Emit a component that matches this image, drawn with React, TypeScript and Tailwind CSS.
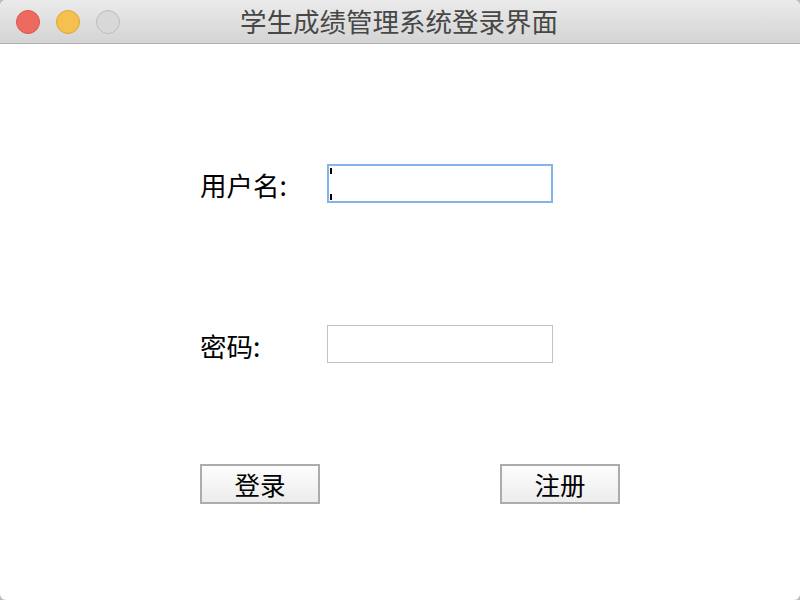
import React from "react";

const cjk = { fontFamily: '"Noto Sans CJK SC", "Noto Sans", sans-serif' };

export default function App() {
  return (
    <div className="w-[800px] h-[600px] bg-[#b8bcc0]" style={cjk}>
      <div className="w-[800px] h-[600px] rounded-[6px] overflow-hidden bg-white flex flex-col">
        <div className="relative h-[44px] shrink-0 bg-gradient-to-b from-[#ebebeb] to-[#d4d4d4] border-b border-[#b0b0b0] flex items-center justify-center">
          <div className="absolute left-[16px] top-[10px] flex gap-[16px]">
            <div className="w-[24px] h-[24px] rounded-full bg-[#ee6a5f] border border-[#d9574d]" />
            <div className="w-[24px] h-[24px] rounded-full bg-[#f6c04f] border border-[#dca53c]" />
            <div className="w-[24px] h-[24px] rounded-full bg-[#d8d8d8] border border-[#bdbdbd]" />
          </div>
          <span className="text-[26.5px] leading-none text-[#474747] ml-[-2px]">学生成绩管理系统登录界面</span>
        </div>
        <div className="flex flex-col pl-[200px] pt-[120px]">
          <div className="flex items-center h-[39px]">
            <span className="w-[127px] text-[26.5px] leading-none text-black mt-[3px]">用户名:</span>
            <div className="relative w-[226px] h-[39px] border-2 border-[#86b2ee] bg-white">
              <span className="absolute left-[1px] top-[2px] w-[2px] h-[6px] bg-black" />
              <span className="absolute left-[1px] top-[28px] w-[2px] h-[6px] bg-black" />
            </div>
          </div>
          <div className="flex items-center h-[38px] mt-[122px]">
            <span className="w-[127px] text-[26.5px] leading-none text-black mt-[5px]">密码:</span>
            <div className="w-[226px] h-[38px] border border-[#c2c2c2] bg-white" />
          </div>
          <div className="flex mt-[101px] gap-[180px]">
            <div className="w-[120px] h-[40px] border-2 border-[#acacac] bg-gradient-to-b from-[#fdfdfd] to-[#ececec] flex items-center justify-center text-[25.5px] leading-none text-black">
              登录
            </div>
            <div className="w-[120px] h-[40px] border-2 border-[#acacac] bg-gradient-to-b from-[#fdfdfd] to-[#ececec] flex items-center justify-center text-[25.5px] leading-none text-black">
              注册
            </div>
          </div>
        </div>
      </div>
    </div>
  );
}
